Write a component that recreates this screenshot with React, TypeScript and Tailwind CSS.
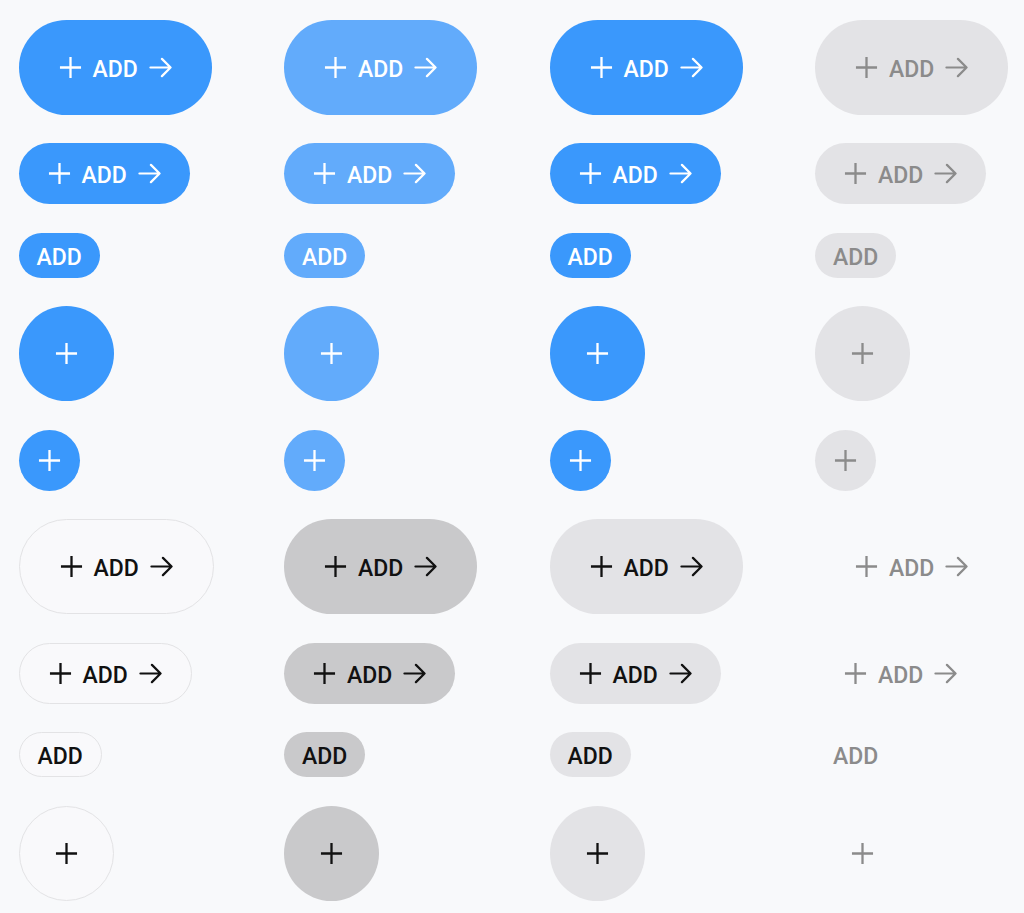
import React from "react";

type Variant = "primary" | "light" | "disabled" | "outline" | "gray" | "soft" | "ghost";

const variantCls: Record<Variant, string> = {
  primary: "bg-[#3a98fc] text-white",
  light: "bg-[#62abfb] text-white",
  disabled: "bg-[#e3e3e6] text-[#8b8b8b]",
  outline: "bg-[#f9f9fb] text-[#111111] border border-[#e3e3e5]",
  gray: "bg-[#c9c9cb] text-[#111111]",
  soft: "bg-[#e3e3e6] text-[#111111]",
  ghost: "bg-transparent text-[#8b8b8b]",
};

function PlusIcon() {
  return (
    <svg width="23" height="23" viewBox="0 0 24 24" fill="none" stroke="currentColor" strokeWidth="2.4" strokeLinecap="butt">
      <path d="M12 1v22M1 12h22" />
    </svg>
  );
}

function ArrowIcon() {
  return (
    <svg width="23" height="23" viewBox="0 0 24 24" fill="none" stroke="currentColor" strokeWidth="2.3" strokeLinecap="round" strokeLinejoin="round">
      <path d="M1.5 12h21M13.5 3l9 9-9 9" />
    </svg>
  );
}

const label = "text-[23px] font-medium leading-none translate-y-[1.5px]";

function Pill({ v, size }: { v: Variant; size: "lg" | "md" }) {
  const sz = size === "lg" ? "h-[95px] px-[40px]" : "h-[61px] px-[29px]";
  return (
    <button className={`flex items-center gap-[11px] rounded-full ${sz} ${variantCls[v]}`}>
      <PlusIcon />
      <span className={label}>ADD</span>
      <ArrowIcon />
    </button>
  );
}

function Small({ v }: { v: Variant }) {
  return (
    <button className={`flex items-center h-[45px] px-[18px] rounded-full ${variantCls[v]}`}>
      <span className={label}>ADD</span>
    </button>
  );
}

function Circle({ v, size }: { v: Variant; size: "lg" | "sm" }) {
  const sz = size === "lg" ? "w-[95px] h-[95px]" : "w-[61px] h-[61px]";
  return (
    <button className={`flex items-center justify-center rounded-full ${sz} ${variantCls[v]}`}>
      <PlusIcon />
    </button>
  );
}

export default function App() {
  const top: Variant[] = ["primary", "light", "primary", "disabled"];
  const bottom: Variant[] = ["outline", "gray", "soft", "ghost"];
  return (
    <div
      className="min-h-screen w-full bg-[#f8f9fb]"
      style={{ fontFamily: "Roboto, 'Liberation Sans', sans-serif" }}
    >
      <div className="grid grid-cols-[repeat(4,265.5px)] gap-y-[28.5px] pt-[19.5px] pl-[18.5px] justify-items-start">
        {top.map((v, i) => <Pill key={"a" + i} v={v} size="lg" />)}
        {top.map((v, i) => <Pill key={"b" + i} v={v} size="md" />)}
        {top.map((v, i) => <Small key={"c" + i} v={v} />)}
        {top.map((v, i) => <Circle key={"d" + i} v={v} size="lg" />)}
        {top.map((v, i) => <Circle key={"e" + i} v={v} size="sm" />)}
        {bottom.map((v, i) => <Pill key={"f" + i} v={v} size="lg" />)}
        {bottom.map((v, i) => <Pill key={"g" + i} v={v} size="md" />)}
        {bottom.map((v, i) => <Small key={"h" + i} v={v} />)}
        {bottom.map((v, i) => <Circle key={"i" + i} v={v} size="lg" />)}
      </div>
    </div>
  );
}
